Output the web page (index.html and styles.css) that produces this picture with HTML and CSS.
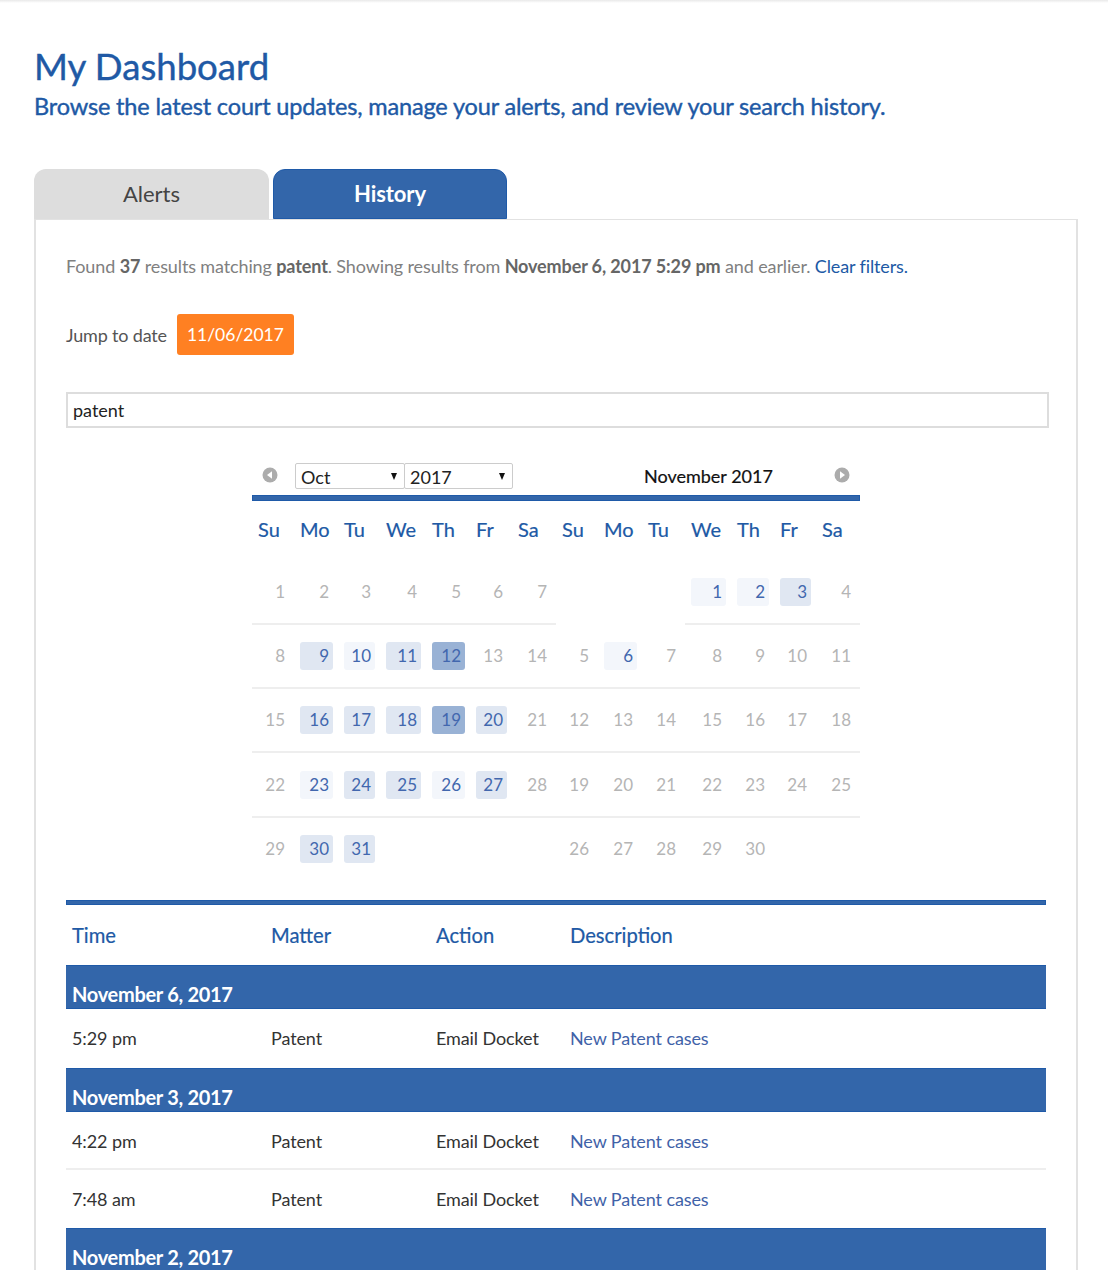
FILE: index.html
```html
<!DOCTYPE html>
<html lang="en">
<head>
<meta charset="utf-8">
<title>My Dashboard</title>
<link rel="stylesheet" href="styles.css">
</head>
<body>
<div class="top-strip"></div>
<main class="page">
  <h1 class="title">My Dashboard</h1>
  <p class="subtitle">Browse the latest court updates, manage your alerts, and review your search history.</p>

  <nav class="tabs">
    <a class="tab tab-idle">Alerts</a>
    <a class="tab tab-active">History</a>
  </nav>

  <section class="panel">
    <p class="summary">Found <b>37</b> results matching <b>patent</b>. Showing results from <b>November 6, 2017 5:29 pm</b> and earlier. <a class="link">Clear filters.</a></p>

    <div class="jump">
      <span class="jump-label">Jump to date</span>
      <span class="jump-date">11/06/2017</span>
    </div>

    <input class="search" type="text" value="patent">

    <div class="calendar">
      <div class="cal-head">
        <div class="cal-head-left">
          <svg class="cal-nav" viewBox="0 0 16 16"><circle cx="8" cy="8" r="7.5" fill="#acacac"/><path d="M10 4.2v7.6L5 8z" fill="#fff"/></svg>
          <span class="select-wrap select-month"><select class="select"><option>Oct</option></select></span>
          <span class="select-wrap select-year"><select class="select"><option>2017</option></select></span>
        </div>
        <div class="cal-head-right">
          <span class="cal-title">November 2017</span>
          <svg class="cal-nav" viewBox="0 0 16 16"><circle cx="8" cy="8" r="7.5" fill="#acacac"/><path d="M6 4.2v7.6L11 8z" fill="#fff"/></svg>
        </div>
      </div>
      <div class="rule"></div>
      <div class="months">
        <div class="month month-oct">
          <span class="dow">Su</span><span class="dow">Mo</span><span class="dow">Tu</span><span class="dow">We</span><span class="dow">Th</span><span class="dow">Fr</span><span class="dow">Sa</span>
          <span class="day"><i>1</i></span><span class="day"><i>2</i></span><span class="day"><i>3</i></span><span class="day"><i>4</i></span><span class="day"><i>5</i></span><span class="day"><i>6</i></span><span class="day"><i>7</i></span>
          <span class="day"><i>8</i></span><span class="day"><i class="l2">9</i></span><span class="day"><i class="l1">10</i></span><span class="day"><i class="l2">11</i></span><span class="day"><i class="l3">12</i></span><span class="day"><i>13</i></span><span class="day"><i>14</i></span>
          <span class="day"><i>15</i></span><span class="day"><i class="l2">16</i></span><span class="day"><i class="l2">17</i></span><span class="day"><i class="l2">18</i></span><span class="day"><i class="l3">19</i></span><span class="day"><i class="l2">20</i></span><span class="day"><i>21</i></span>
          <span class="day"><i>22</i></span><span class="day"><i class="l1">23</i></span><span class="day"><i class="l2">24</i></span><span class="day"><i class="l2">25</i></span><span class="day"><i class="l1">26</i></span><span class="day"><i class="l2">27</i></span><span class="day"><i>28</i></span>
          <span class="day last"><i>29</i></span><span class="day last"><i class="l2">30</i></span><span class="day last"><i class="l2">31</i></span><span class="day last"></span><span class="day last"></span><span class="day last"></span><span class="day last"></span>
        </div>
        <div class="month month-nov">
          <span class="dow">Su</span><span class="dow">Mo</span><span class="dow">Tu</span><span class="dow">We</span><span class="dow">Th</span><span class="dow">Fr</span><span class="dow">Sa</span>
          <span class="day last"></span><span class="day last"></span><span class="day last"></span><span class="day"><i class="l1">1</i></span><span class="day"><i class="l1">2</i></span><span class="day"><i class="l2">3</i></span><span class="day"><i>4</i></span>
          <span class="day"><i>5</i></span><span class="day"><i class="l1">6</i></span><span class="day"><i>7</i></span><span class="day"><i>8</i></span><span class="day"><i>9</i></span><span class="day"><i>10</i></span><span class="day"><i>11</i></span>
          <span class="day"><i>12</i></span><span class="day"><i>13</i></span><span class="day"><i>14</i></span><span class="day"><i>15</i></span><span class="day"><i>16</i></span><span class="day"><i>17</i></span><span class="day"><i>18</i></span>
          <span class="day"><i>19</i></span><span class="day"><i>20</i></span><span class="day"><i>21</i></span><span class="day"><i>22</i></span><span class="day"><i>23</i></span><span class="day"><i>24</i></span><span class="day"><i>25</i></span>
          <span class="day last"><i>26</i></span><span class="day last"><i>27</i></span><span class="day last"><i>28</i></span><span class="day last"><i>29</i></span><span class="day last"><i>30</i></span><span class="day last"></span><span class="day last"></span>
        </div>
      </div>
    </div>

    <div class="rule table-rule"></div>
    <table class="history">
      <colgroup><col class="col-time"><col class="col-matter"><col class="col-action"><col></colgroup>
      <thead>
        <tr class="head-row"><th>Time</th><th>Matter</th><th>Action</th><th>Description</th></tr>
      </thead>
      <tbody>
        <tr class="group"><td colspan="4">November 6, 2017</td></tr>
        <tr class="row"><td>5:29 pm</td><td>Patent</td><td>Email Docket</td><td><a class="desc">New Patent cases</a></td></tr>
        <tr class="group"><td colspan="4">November 3, 2017</td></tr>
        <tr class="row row-line"><td>4:22 pm</td><td>Patent</td><td>Email Docket</td><td><a class="desc">New Patent cases</a></td></tr>
        <tr class="row"><td>7:48 am</td><td>Patent</td><td>Email Docket</td><td><a class="desc">New Patent cases</a></td></tr>
        <tr class="group"><td colspan="4">November 2, 2017</td></tr>
      </tbody>
    </table>
  </section>
</main>
</body>
</html>
```

FILE: styles.css
```css
* { box-sizing: border-box; }
html, body { margin: 0; height: 1270px; overflow: hidden; background: #fff; }
body { font-family: Lato, "Open Sans", sans-serif; color: #333; }

.top-strip { height: 3px; background: linear-gradient(#e9e9e9, #fff); }

.page { padding: 41px 30px 0 34px; }

.title { margin: 0; font-size: 36.6px; line-height: 44px; font-weight: 400; color: #2059a5; -webkit-text-stroke: 0.4px #2059a5; }
.subtitle { margin: 0; font-size: 23.5px; line-height: 36px; letter-spacing: -0.15px; font-weight: 400; color: #2059a5; -webkit-text-stroke: 0.4px #2059a5; }

.tabs { display: flex; gap: 4px; margin-top: 45px; }
.tab { width: 235px; height: 50px; border-radius: 12px 12px 0 0; display: flex; align-items: center; justify-content: center; font-size: 22px; padding-bottom: 2px; }
.tab-idle { background: #ddd; color: #444; }
.tab-active { width: 234px; height: 49.5px; padding-bottom: 0; background: #3366aa; border: 1px solid #1f5aa8; color: #fff; font-weight: 700; letter-spacing: -0.1px; }

.panel { border: 2px solid #e2e2e2; border-bottom: 0; border-top-width: 1px; padding: 0 30px; height: 1200px; }

.summary { margin: 35px 0 0; font-size: 18px; line-height: 22px; letter-spacing: -0.125px; color: #808080; }
.summary b { color: #666; font-weight: 700; }
.link { color: #2059a5; }

.jump { display: flex; align-items: center; gap: 10px; margin-top: 37px; }
.jump-label { font-size: 18px; letter-spacing: -0.17px; color: #555; }
.jump-date { width: 117px; height: 41px; display: flex; align-items: center; justify-content: center; background: #ff8022; border-radius: 3px; color: #fff; font-size: 17.5px; }

.search { display: block; width: 983px; height: 36px; margin-top: 37px; padding: 0 5px; border: 2px solid #ddd; font: 18px Lato, sans-serif; color: #222; background: #fff; outline: 0; }

.calendar { width: 608px; margin: 35px 0 0 186px; }
.cal-head { display: flex; height: 32px; }
.cal-head-left { width: 304px; display: flex; align-items: flex-start; }
.cal-head-left .cal-nav { margin: 4px 17px 0 10px; }
.cal-head-right { flex: 1; display: flex; align-items: flex-start; }
.cal-head-right .cal-title { margin: 1px 0 0 88px; width: 190px; font-size: 18px; line-height: 24px; color: #111; -webkit-text-stroke: 0.2px #111; }
.cal-head-right .cal-nav { margin-top: 4px; }
.cal-nav { width: 16px; height: 16px; flex: none; }

.select-wrap { position: relative; display: block; height: 26px; }
.select-month { width: 110px; }
.select-year { width: 109px; margin-left: -1px; }
.select-wrap::after { content: ""; position: absolute; right: 8px; top: 10px; border: 4px solid transparent; border-top: 7px solid #111; border-bottom: 0; border-left-width: 3.5px; border-right-width: 3.5px; }
.select { appearance: none; -webkit-appearance: none; display: block; width: 100%; height: 26px; padding: 1px 0 0 5px; border: 1px solid #ccc; border-radius: 2px; background: #fff; font: 18px Lato, sans-serif; color: #222; }

.rule { height: 5.5px; background: #3366aa; border: 1px solid #1f5aa8; }

.months { display: flex; }
.month { width: 304px; display: grid; grid-template-rows: 60px repeat(5, 64.3px); }
.month-oct { grid-template-columns: 42px 44px 42px 46px 44px 42px 44px; }
.month-nov { grid-template-columns: 42px 44px 43px 46px 43px 42px 44px; }

.dow { padding: 15px 0 0 6px; font-size: 20px; line-height: 26px; color: #2059a5; -webkit-text-stroke: 0.2px #2059a5; }

.day { display: flex; align-items: center; padding: 0 5px 0 6px; border-bottom: 2px solid #eee; height: 64.3px; }
.day.last { border-bottom-color: transparent; }
.day i { display: block; width: 100%; height: 28px; padding-right: 4px; border-radius: 3px; font-style: normal; font-size: 17px; line-height: 28px; text-align: right; color: #b5b5b5; }
.day .l1, .day .l2, .day .l3 { color: #4267ae; }
.day .l1 { background: #f3f6fb; }
.day .l2 { background: #e0e7f2; }
.day .l3 { background: #99b2d5; }

.table-rule { margin-top: 18px; width: 980px; }

.history { width: 980px; border-collapse: separate; border-spacing: 0; table-layout: fixed; }
.col-time { width: 199px; }
.col-matter { width: 165px; }
.col-action { width: 134px; }
.history th { height: 60px; padding: 0 0 0 6px; text-align: left; font-size: 20.2px; font-weight: 400; color: #2059a5; -webkit-text-stroke: 0.2px #2059a5; }
.group td { height: 44px; padding: 14px 0 0 6px; background: #3366aa; border-top: 1px solid #1f5aa8; border-bottom: 1px solid #1f5aa8; color: #fff; font-size: 20px; line-height: 27px; letter-spacing: -0.3px; font-weight: 700; }
.row td { height: 59px; padding: 0 0 2px 6px; font-size: 18px; letter-spacing: -0.1px; color: #333; }
.row-line td { height: 58px; padding: 2px 0 0 6px; border-bottom: 2px solid #eee; }
.row-line + .row td { height: 58px; padding: 0 0 0 6px; }
.desc { color: #3f62a8; }
```
